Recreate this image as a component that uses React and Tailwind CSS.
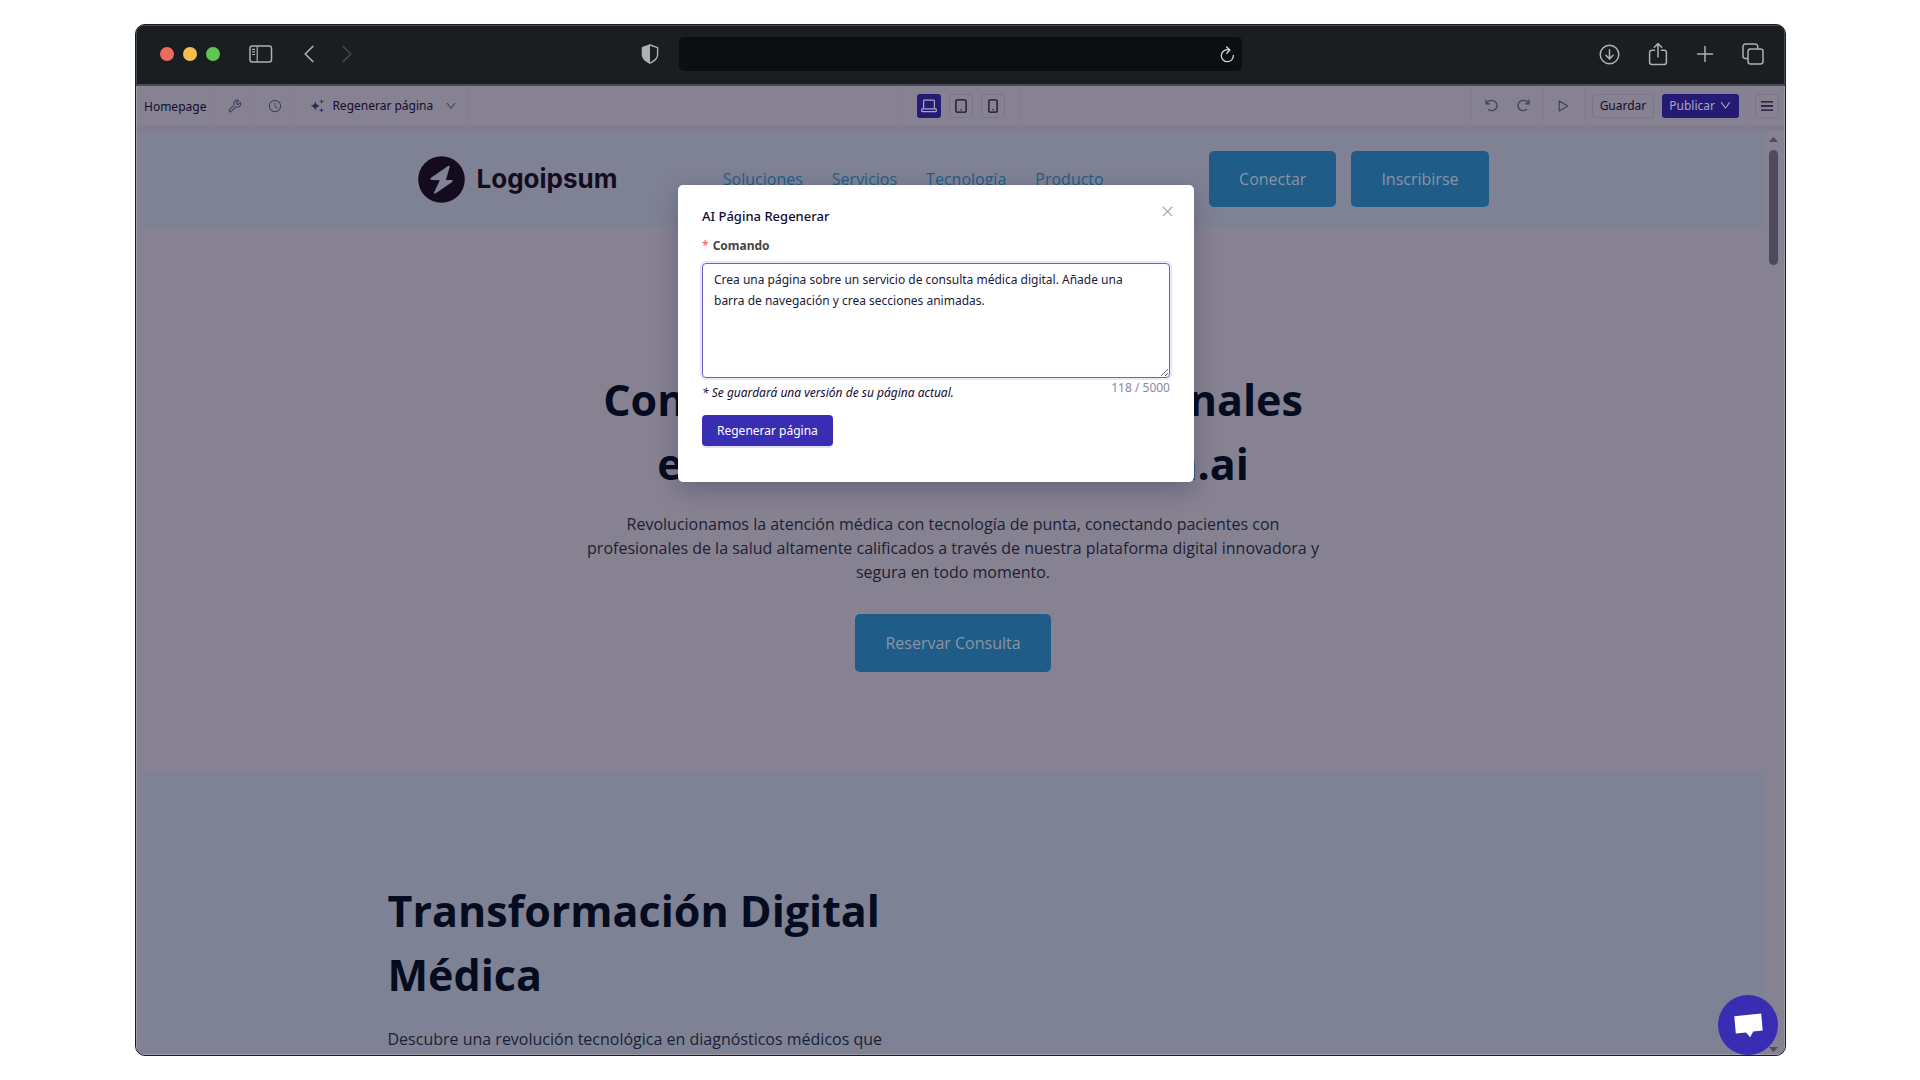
import React, { useState } from 'react';
import { AiOutlineClockCircle, AiOutlineClose, AiOutlineDown } from 'react-icons/ai';
import { Wrench } from 'lucide-react';

const MAX_LENGTH = 5000;

const navLinks = ['Soluciones', 'Servicios', 'Tecnología', 'Producto'];

const LaptopIcon = () => (
  <svg width="16" height="14" viewBox="0 0 16 14" fill="none" stroke="currentColor" strokeWidth="1.2" strokeLinejoin="round">
    <path d="M2.600 9.500V1.800c0-.4.300-.7.700-.7h9.400c.4 0 .7.300.7.7v7.700" />
    <rect x=".7" y="9.800" width="14.600" height="2.800" rx=".7" />
  </svg>
);

const TabletIcon = () => (
  <svg width="12" height="14" viewBox="0 0 12 14" fill="none" stroke="currentColor" strokeWidth="1.3">
    <rect x=".9" y=".8" width="10.200" height="12.400" rx="1.200" />
    <circle cx="6" cy="10.800" r=".7" fill="currentColor" stroke="none" />
  </svg>
);

const MobileIcon = () => (
  <svg width="10" height="14" viewBox="0 0 10 14" fill="none" stroke="currentColor" strokeWidth="1.3">
    <rect x=".9" y=".8" width="8.200" height="12.400" rx="1.200" />
    <circle cx="5" cy="10.800" r=".7" fill="currentColor" stroke="none" />
  </svg>
);

const devices = [
  { id: 'desktop', label: 'Escritorio', Icon: LaptopIcon },
  { id: 'tablet', label: 'Tableta', Icon: TabletIcon },
  { id: 'mobile', label: 'Móvil', Icon: MobileIcon },
];

const TitleBar = () => (
  <div className="grid h-[61px] shrink-0 grid-cols-[1fr_34.2%_1fr] items-center border-x border-t border-b-2 border-[#464b50] border-b-[#464a59] bg-[#1a1e20] pb-0.5 text-[#aeb0b1]">
    <div className="flex items-center justify-between pr-[20px] pl-[23px]">
      <div className="flex items-center">
        <div className="flex gap-[9px]">
          <span className="size-[14px] rounded-full bg-[#ed6a5e]" />
          <span className="size-[14px] rounded-full bg-[#f5bf4f]" />
          <span className="size-[14px] rounded-full bg-[#61c554]" />
        </div>
        <button aria-label="Barra lateral" className="ml-[29px]">
          <svg width="24" height="18" viewBox="0 0 24 18" fill="none" stroke="currentColor" strokeWidth="1.5">
            <rect x="1" y="1" width="21.5" height="16" rx="2.2" />
            <path d="M8.2 1v16M3.2 4.3h2.8M3.2 6.9h2.8M3.2 9.5h2.8" strokeWidth="1.2" />
          </svg>
        </button>
        <button aria-label="Atrás" className="ml-[31px]">
          <svg width="10" height="18" viewBox="0 0 10 18" fill="none" stroke="currentColor" strokeWidth="1.7" strokeLinecap="round" strokeLinejoin="round">
            <path d="M8.8 1.5 1.2 9l7.6 7.5" />
          </svg>
        </button>
        <button aria-label="Adelante" className="ml-7 text-[#45494b]">
          <svg width="10" height="18" viewBox="0 0 10 18" fill="none" stroke="currentColor" strokeWidth="1.5" strokeLinecap="round" strokeLinejoin="round">
            <path d="m1.2 1.5 7.6 7.5-7.6 7.5" />
          </svg>
        </button>
      </div>
      <svg width="18" height="20" viewBox="0 0 18 20" fill="none" stroke="currentColor" strokeWidth="1.4" strokeLinejoin="round">
        <path d="M9 1l7.6 2.6v7.2c0 3.6-3.4 6.4-7.6 8.4-4.2-2-7.6-4.8-7.6-8.4V3.6z" />
        <path d="M9 1v18.2c-4.2-2-7.6-4.8-7.6-8.4V3.6z" fill="currentColor" stroke="none" />
      </svg>
    </div>

    <div className="flex h-[34px] items-center rounded-[5px] bg-[#0c0f11] pr-[7px]">
      <input aria-label="Dirección" className="min-w-0 flex-1 bg-transparent outline-none" />
      <button aria-label="Recargar" className="text-[#d8d8d8]">
        <svg width="15" height="17" viewBox="0 0 15 17" fill="none" stroke="currentColor" strokeWidth="1.3" strokeLinecap="round" strokeLinejoin="round">
          <path d="M13.300 9.500a6 6 0 1 1-5.900-5.800c.8 0 1.400 0 2.200.2" />
          <path d="M6.600 1 9.800 4 6.800 7.200" />
        </svg>
      </button>
    </div>

    <div className="flex items-center justify-end gap-7 pr-5">
      <button aria-label="Descargas">
        <svg width="21" height="21" viewBox="0 0 21 21" fill="none" stroke="currentColor" strokeWidth="1.5" strokeLinecap="round" strokeLinejoin="round">
          <circle cx="10.5" cy="10.5" r="9.3" />
          <path d="M10.5 5.8v9M6.9 11.3l3.6 3.6 3.600-3.600" />
        </svg>
      </button>
      <button aria-label="Compartir">
        <svg width="20" height="24" viewBox="0 0 20 24" fill="none" stroke="currentColor" strokeWidth="1.5" strokeLinecap="round" strokeLinejoin="round">
          <path d="M6.5 8.2H3.8a2.200 2.200 0 0 0-2.200 2.200v9.800a2.200 2.200 0 0 0 2.200 2.200h12.400a2.200 2.200 0 0 0 2.200-2.200v-9.800a2.200 2.200 0 0 0-2.200-2.200h-2.700" />
          <path d="M10 15V1.8M6.3 5.3 10 1.6l3.7 3.7" />
        </svg>
      </button>
      <button aria-label="Nueva pestaña">
        <svg width="18" height="18" viewBox="0 0 18 18" fill="none" stroke="currentColor" strokeWidth="1.5" strokeLinecap="round">
          <path d="M9 1.5v15M1.5 9h15" />
        </svg>
      </button>
      <button aria-label="Pestañas">
        <svg width="22" height="22" viewBox="0 0 22 22" fill="none" stroke="currentColor" strokeWidth="1.5" strokeLinejoin="round">
          <rect x="6" y="6" width="15" height="15" rx="2.4" />
          <path d="M6 15.5H3.400A2.400 2.400 0 0 1 1 13.100V3.400A2.400 2.400 0 0 1 3.400 1h9.900a2.400 2.400 0 0 1 2.400 2.400V6" />
        </svg>
      </button>
    </div>
  </div>
);

const SparklesIcon = () => (
  <svg width="14" height="14" viewBox="0 0 14 14" fill="currentColor">
    <path d="M5.300 2c.6 3 1.400 4 4.600 4.900-3.200.9-4 1.800-4.600 4.900C4.700 8.700 3.800 7.800.6 6.900 3.800 6 4.700 5 5.300 2z" />
    <path d="M11.200.4h.9v1.500h1.500v.9h-1.500v1.500h-.9V2.800H9.700v-.9h1.500zM11 9.400h.9v1.400h1.400v.9h-1.400v1.400H11v-1.400H9.600v-.9H11z" />
  </svg>
);

const UndoIcon = ({ className }) => (
  <svg className={className} width="13" height="13" viewBox="0 0 13 13" fill="none" stroke="currentColor" strokeWidth="1.300" strokeLinecap="round" strokeLinejoin="round">
    <path d="M1 1.200v3.600h3.600" />
    <path d="M1.300 4.600C2.400 2.600 4.400 1.400 6.700 1.400a5.100 5.100 0 0 1 5.300 5.100 5.100 5.100 0 0 1-5.300 5.100c-1.300 0-2.300-.4-3.200-1.100" />
  </svg>
);

const Toolbar = () => {
  const [device, setDevice] = useState('desktop');

  return (
    <div className="grid h-[39px] shrink-0 grid-cols-[1fr_auto_1fr] bg-[#868292] font-['Noto_Sans',sans-serif] text-[12px] text-[#140c30]">
      <div className="flex">
        <div className="flex items-center border-r border-[#827e8f] pt-0.5 pr-2 pl-[7px]">Homepage</div>
        <button aria-label="Herramientas" className="flex w-10 items-center justify-center border-r border-[#827e8f] text-[#453e63]">
          <Wrench size={14} strokeWidth={1.9} />
        </button>
        <button aria-label="Historial" className="flex w-10 items-center justify-center border-r border-[#827e8f] text-[#453e63]">
          <AiOutlineClockCircle size={14} />
        </button>
        <div className="flex items-center border-r border-[#827e8f] pr-[10px] pl-[15px]">
          <button className="flex items-center gap-2">
            <span className="text-[#30285a]"><SparklesIcon /></span>
            Regenerar página
          </button>
          <button aria-label="Más opciones" className="ml-3 text-[#453e63]">
            <AiOutlineDown size={12} />
          </button>
        </div>
      </div>

      <div className="flex items-center gap-2 border-x border-[#827e8f] px-[15px]">
        {devices.map(({ id, label, Icon }) => (
          <button
            key={id}
            aria-label={label}
            onClick={() => setDevice(id)}
            className={
              device === id
                ? 'flex size-6 items-center justify-center rounded-[3px] bg-[#251b75] text-[#aaa7bb]'
                : 'flex size-6 items-center justify-center rounded-[3px] border border-[#7b7789] text-[#140c30]'
            }
          >
            <Icon />
          </button>
        ))}
      </div>

      <div className="flex justify-end">
        <div className="flex items-center gap-[19px] border-x border-[#827e8f] px-[13px] text-[#453e63]">
          <button aria-label="Deshacer"><UndoIcon /></button>
          <button aria-label="Rehacer"><UndoIcon className="-scale-x-100" /></button>
        </div>
        <button aria-label="Vista previa" className="flex w-10 items-center justify-center text-[#453e63]">
          <svg width="11" height="12" viewBox="0 0 11 12" fill="none" stroke="currentColor" strokeWidth="1.2" strokeLinejoin="round">
            <path d="M1.200 1v10l8.600-5z" />
          </svg>
        </button>
        <div className="flex items-center gap-2 border-x border-[#827e8f] px-[7px]">
          <button className="h-6 rounded-[3px] border border-[#7b7789] px-[7px]">Guardar</button>
          <button className="flex h-6 items-center gap-1 rounded-[3px] bg-[#251b75] px-[7px] text-[#aaa7bb]">
            Publicar
            <AiOutlineDown size={13} />
          </button>
        </div>
        <div className="flex items-center pr-[5px] pl-2">
          <button aria-label="Menú" className="flex size-6 items-center justify-center rounded-[3px] border border-[#7b7789]">
            <svg width="12" height="10" viewBox="0 0 12 10" stroke="currentColor" strokeWidth="1.300">
              <path d="M0 .9h12M0 5h12M0 9.100h12" />
            </svg>
          </button>
        </div>
      </div>
    </div>
  );
};

const Logo = () => (
  <a href="#" className="flex items-center gap-3 text-[#150b1f]">
    <svg width="47" height="47" viewBox="0 0 47 47">
      <circle cx="23.5" cy="23.5" r="23.3" fill="currentColor" />
      <path
        d="M30 10 13 21.800c-1.200.9-.7 2 .5 2.100l8.600.3c-.2 0-.5.400-.7.800l-5.200 11.200c-.6 1.300.5 2 1.600 1.100L34.200 26c1-.8.600-1.900-.6-1.900l-6.100-.2c.3-.2.500-.5.700-.9l3.400-11.800c.4-1.300-.5-1.900-1.600-1.200z"
        fill="#7f8294"
      />
    </svg>
    <span className="font-['Inter',sans-serif] text-[26px] leading-none font-bold">Logoipsum</span>
  </a>
);

const SitePage = () => (
  <div className="min-w-0 flex-1 font-['Open_Sans',sans-serif] text-[16px] leading-6 text-[#1c2034]">
    <header className="flex h-24 items-center bg-[#7f8294]">
      <div className="mx-auto flex w-full max-w-[1071px] items-center justify-between">
        <Logo />
        <nav className="flex gap-[29px] text-[#1f5e88]">
          {navLinks.map((link) => (
            <a key={link} href="#">{link}</a>
          ))}
        </nav>
        <div className="flex gap-[15px] text-[#8b93a5]">
          <button className="h-14 rounded-[5px] bg-[#1f5d88] px-[30px] font-medium">Conectar</button>
          <button className="h-14 rounded-[5px] bg-[#1f5d88] px-[30px] font-medium">Inscribirse</button>
        </div>
      </div>
    </header>

    <section className="flex flex-col items-center bg-[#868292] pt-[141px] pb-[99px] text-center">
      <h1 className="text-[43px] leading-16 font-bold text-[#050c1f]">
        Consultas Médicas Profesionales
        <br />
        en Línea con MediConum.ai
      </h1>
      <p className="mt-4 max-w-[740px]">
        Revolucionamos la atención médica con tecnología de punta, conectando pacientes con
        profesionales de la salud altamente calificados a través de nuestra plataforma digital
        innovadora y segura en todo momento.
      </p>
      <button className="mt-[30px] h-[58px] rounded-[5px] bg-[#1f5d88] px-[30px] font-medium text-[#8b93a5]">
        Reservar Consulta
      </button>
    </section>

    <section className="bg-[#7f8294] pt-[108px] pb-24">
      <div className="mx-auto max-w-[1131px]">
        <div className="max-w-[520px]">
          <h2 className="text-[43px] leading-16 font-bold text-[#050c1f]">Transformación Digital Médica</h2>
          <p className="mt-5">Descubre una revolución tecnológica en diagnósticos médicos que</p>
        </div>
      </div>
    </section>
  </div>
);

const Scrollbar = () => (
  <div className="flex w-[18px] shrink-0 flex-col items-center bg-[#868292] pt-[6px] pr-[3px] pb-[2px] text-[#4d4a5e]">
    <svg width="9" height="5" viewBox="0 0 9 5" fill="currentColor"><path d="M4.500 0 9 5H0z" /></svg>
    <div className="mt-2 h-[115px] w-[9px] rounded-full bg-[#4d4a5e]" />
    <svg className="mt-auto" width="9" height="5" viewBox="0 0 9 5" fill="currentColor"><path d="M0 0h9L4.500 5z" /></svg>
  </div>
);

const RegenerateModal = () => {
  const [prompt, setPrompt] = useState(
    'Crea una página sobre un servicio de consulta médica digital. Añade una barra de navegación y crea secciones animadas.'
  );

  return (
    <div
      role="dialog"
      aria-labelledby="modal-title"
      className="relative h-fit w-[516px] rounded-[5px] bg-white px-6 pt-[21px] pb-[36px] font-['Noto_Sans',sans-serif] text-[12px] text-[#201a3b] shadow-[0_8px_24px_rgba(20,10,45,0.25)]"
    >
      <button aria-label="Cerrar" className="absolute top-[19px] right-[19px] text-[#a19fb8]">
        <AiOutlineClose size={15} />
      </button>
      <h2 id="modal-title" className="text-[13px] leading-5 font-medium text-[#140c30]">AI Página Regenerar</h2>
      <form onSubmit={(e) => e.preventDefault()}>
        <label htmlFor="prompt" className="mt-2.5 flex items-center gap-1 text-[12px] leading-5 font-bold text-[#454545]">
          <span className="font-normal text-[#ff4d4f]">*</span>
          Comando
        </label>
        <textarea
          id="prompt"
          value={prompt}
          maxLength={MAX_LENGTH}
          onChange={(e) => setPrompt(e.target.value)}
          className="mt-[7px] block h-[115px] w-full resize-y rounded-[4px] border border-[#6a62c8] py-[5px] pr-7 pl-[11px] leading-[21px] shadow-[0_0_0_2px_rgba(75,60,200,0.12)] outline-none"
        />
        <div className="flex justify-between leading-5">
          <p className="pt-[5px] text-[#140c30] italic">* Se guardará una versión de su página actual.</p>
          <span className="text-[#8a86a3]">{prompt.length} / {MAX_LENGTH}</span>
        </div>
        <button className="mt-3 h-[31px] rounded-[4px] bg-[#392eb3] px-[15px] text-white shadow-[0_2px_0_rgba(57,46,179,0.15)]">
          Regenerar página
        </button>
      </form>
    </div>
  );
};

const App = () => {
  return (
    <div className="h-screen bg-white py-6 pr-[134px] pl-[135px]">
      <div className="relative flex h-full flex-col overflow-hidden rounded-[10px] border border-[#1b1b22] bg-[#868292]">
        <TitleBar />
        <div className="flex min-h-0 flex-1 flex-col border-x border-b border-[#a09daa]">
          <Toolbar />
          <div className="h-[6px] shrink-0 bg-[#817d8e]" />
          <div className="flex min-h-0 flex-1 overflow-hidden pl-[3px]">
            <SitePage />
            <Scrollbar />
          </div>
        </div>

        <div className="absolute inset-0 flex justify-center pt-[160px] pr-[49px]">
          <RegenerateModal />
        </div>

        <button aria-label="Chat" className="absolute right-[7px] bottom-0 flex size-[60px] items-center justify-center rounded-full bg-[#392eb3]">
          <svg width="29" height="25" viewBox="0 0 29 25" fill="white">
            <path d="M.3 3.200 27.200.4l1.500 17.200-9.400.8-3.200 5.800-4-4.800L1.800 20.600z" />
          </svg>
        </button>
      </div>
    </div>
  );
};

export default App;
